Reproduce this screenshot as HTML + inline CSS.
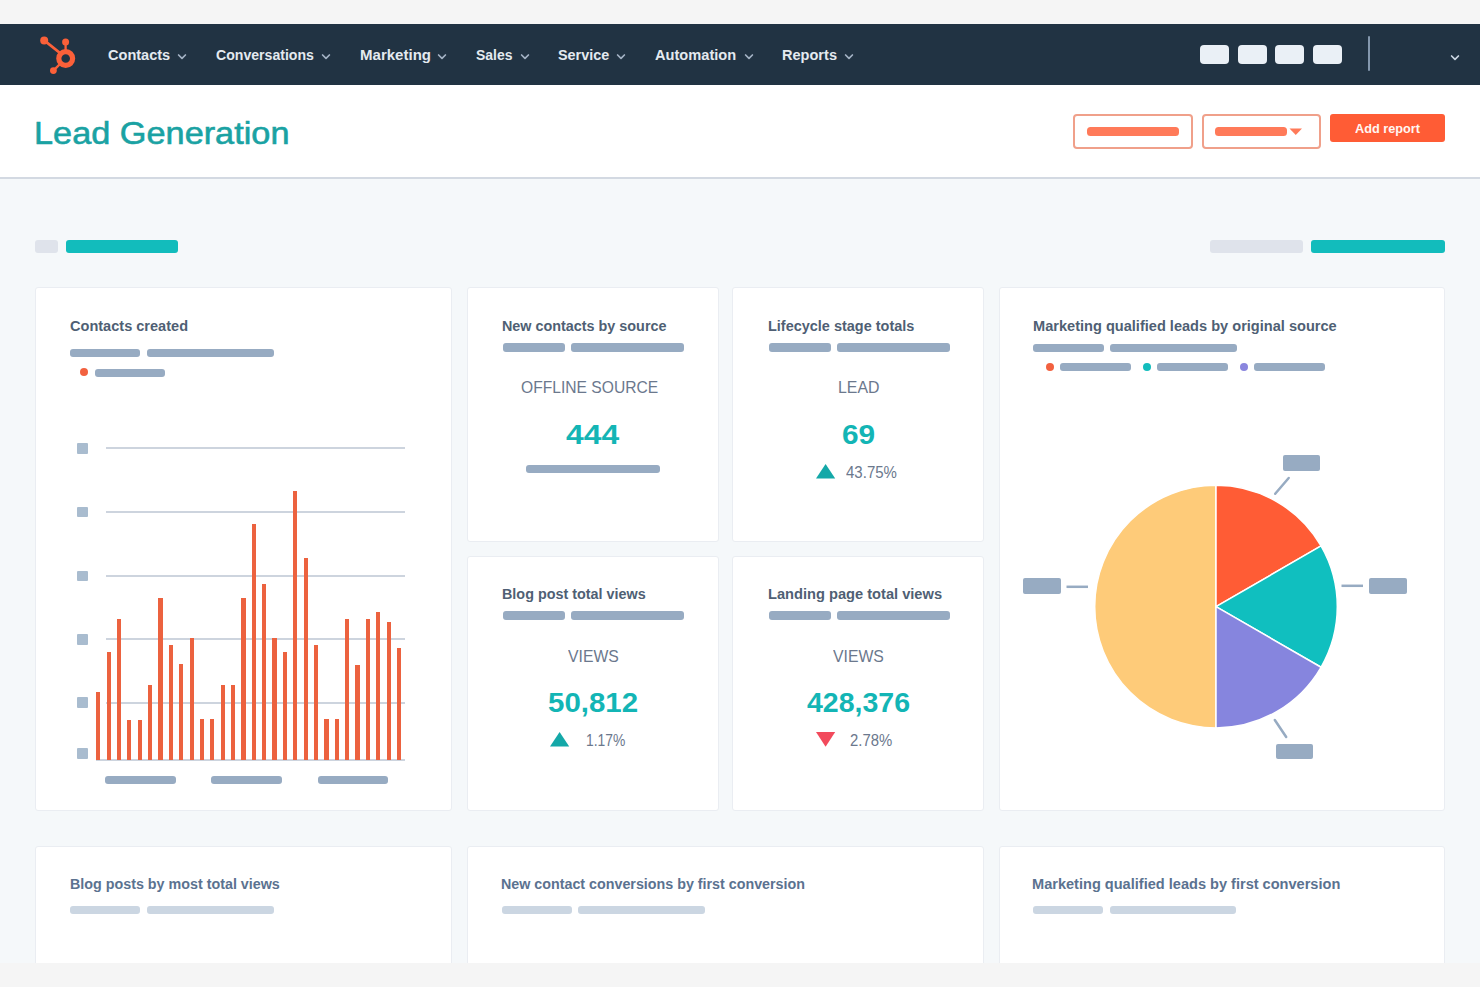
<!DOCTYPE html>
<html><head><meta charset="utf-8"><title>Lead Generation</title>
<style>
html,body{margin:0;padding:0}
body{width:1480px;height:987px;position:relative;overflow:hidden;background:#f5f5f5;font-family:"Liberation Sans",sans-serif}
.t{position:absolute;white-space:nowrap;transform-origin:0 0}
</style></head><body>
<div style="position:absolute;left:0px;top:24px;width:1480px;height:61px;background:#213343;border-radius:0px;"></div>
<div style="position:absolute;left:0px;top:85px;width:1480px;height:92px;background:#ffffff;border-radius:0px;"></div>
<div style="position:absolute;left:0px;top:177px;width:1480px;height:2px;background:#d3d9e2;border-radius:0px;"></div>
<div style="position:absolute;left:0px;top:179px;width:1480px;height:784px;background:#f5f8fa;border-radius:0px;"></div>
<svg style="position:absolute;left:0;top:0" width="120" height="90" viewBox="0 0 120 90">
<g fill="none" stroke="#fb6039" stroke-linecap="round">
<line x1="44.2" y1="40.4" x2="60" y2="53" stroke-width="2.8"/>
<line x1="65.6" y1="42" x2="65.6" y2="50" stroke-width="2.3"/>
<line x1="53.4" y1="70.6" x2="60" y2="64" stroke-width="2.4"/>
<circle cx="65.7" cy="58.5" r="6.9" stroke-width="5.2"/>
</g>
<g fill="#fb6039"><circle cx="44.2" cy="40.4" r="4.0"/><circle cx="65.6" cy="41.9" r="3.5"/><circle cx="53.4" cy="70.6" r="3.4"/></g>
</svg>
<div class="t" style="left:108.42px;top:48.01px;font-size:14.97px;line-height:14.97px;color:#e4eaf0;font-weight:700;transform:scaleX(0.9713)">Contacts</div>
<svg style="position:absolute;left:176.5px;top:52px" width="10" height="8" viewBox="0 0 10 8"><polyline points="1.6,3 5.0,6.4 8.4,3" fill="none" stroke="#a3b2c4" stroke-width="1.7" stroke-linecap="round" stroke-linejoin="round"/></svg>
<div class="t" style="left:215.84px;top:48.01px;font-size:14.97px;line-height:14.97px;color:#e4eaf0;font-weight:700;transform:scaleX(0.9418)">Conversations</div>
<svg style="position:absolute;left:321.0px;top:52px" width="10" height="8" viewBox="0 0 10 8"><polyline points="1.6,3 5.0,6.4 8.4,3" fill="none" stroke="#a3b2c4" stroke-width="1.7" stroke-linecap="round" stroke-linejoin="round"/></svg>
<div class="t" style="left:360.02px;top:48.01px;font-size:14.97px;line-height:14.97px;color:#e4eaf0;font-weight:700;transform:scaleX(1.0041)">Marketing</div>
<svg style="position:absolute;left:436.5px;top:52px" width="10" height="8" viewBox="0 0 10 8"><polyline points="1.6,3 5.0,6.4 8.4,3" fill="none" stroke="#a3b2c4" stroke-width="1.7" stroke-linecap="round" stroke-linejoin="round"/></svg>
<div class="t" style="left:476.08px;top:48.01px;font-size:14.97px;line-height:14.97px;color:#e4eaf0;font-weight:700;transform:scaleX(0.9336)">Sales</div>
<svg style="position:absolute;left:520.0px;top:52px" width="10" height="8" viewBox="0 0 10 8"><polyline points="1.6,3 5.0,6.4 8.4,3" fill="none" stroke="#a3b2c4" stroke-width="1.7" stroke-linecap="round" stroke-linejoin="round"/></svg>
<div class="t" style="left:558.17px;top:48.01px;font-size:14.97px;line-height:14.97px;color:#e4eaf0;font-weight:700;transform:scaleX(0.9618)">Service</div>
<svg style="position:absolute;left:616.0px;top:52px" width="10" height="8" viewBox="0 0 10 8"><polyline points="1.6,3 5.0,6.4 8.4,3" fill="none" stroke="#a3b2c4" stroke-width="1.7" stroke-linecap="round" stroke-linejoin="round"/></svg>
<div class="t" style="left:654.63px;top:48.01px;font-size:14.97px;line-height:14.97px;color:#e4eaf0;font-weight:700;transform:scaleX(0.9769)">Automation</div>
<svg style="position:absolute;left:744.0px;top:52px" width="10" height="8" viewBox="0 0 10 8"><polyline points="1.6,3 5.0,6.4 8.4,3" fill="none" stroke="#a3b2c4" stroke-width="1.7" stroke-linecap="round" stroke-linejoin="round"/></svg>
<div class="t" style="left:782.05px;top:48.01px;font-size:14.97px;line-height:14.97px;color:#e4eaf0;font-weight:700;transform:scaleX(0.9719)">Reports</div>
<svg style="position:absolute;left:843.5px;top:52px" width="10" height="8" viewBox="0 0 10 8"><polyline points="1.6,3 5.0,6.4 8.4,3" fill="none" stroke="#a3b2c4" stroke-width="1.7" stroke-linecap="round" stroke-linejoin="round"/></svg>
<div style="position:absolute;left:1200px;top:45px;width:29px;height:19px;background:#eaf0f6;border-radius:4px;"></div>
<div style="position:absolute;left:1238px;top:45px;width:29px;height:19px;background:#eaf0f6;border-radius:4px;"></div>
<div style="position:absolute;left:1275px;top:45px;width:29px;height:19px;background:#eaf0f6;border-radius:4px;"></div>
<div style="position:absolute;left:1313px;top:45px;width:29px;height:19px;background:#eaf0f6;border-radius:4px;"></div>
<div style="position:absolute;left:1368px;top:36px;width:2px;height:35px;background:#8397ad;border-radius:1px;"></div>
<svg style="position:absolute;left:1449.5px;top:52.5px" width="10" height="8" viewBox="0 0 10 8"><polyline points="1.6,3 5.0,6.4 8.4,3" fill="none" stroke="#cbd6e2" stroke-width="1.7" stroke-linecap="round" stroke-linejoin="round"/></svg>
<div class="t" style="left:34.26px;top:118.00px;font-size:31.83px;line-height:31.83px;color:#1aa2a3;font-weight:400;transform:scaleX(1.0774);-webkit-text-stroke:0.6px #1aa2a3">Lead Generation</div>
<div style="position:absolute;left:1073px;top:114px;width:120px;height:35px;box-sizing:border-box;border:2px solid #f0a08a;border-radius:4px"></div>
<div style="position:absolute;left:1087px;top:127px;width:92px;height:8.5px;background:#ff7a59;border-radius:3.5px;"></div>
<div style="position:absolute;left:1201.5px;top:114px;width:119px;height:35px;box-sizing:border-box;border:2px solid #f0a08a;border-radius:4px"></div>
<div style="position:absolute;left:1215px;top:127px;width:72px;height:8.5px;background:#ff7a59;border-radius:3.5px;"></div>
<svg style="position:absolute;left:1289px;top:128px" width="14" height="8" viewBox="0 0 14 8"><polygon points="0.5,0.5 13,0.5 6.75,7" fill="#ff7a59"/></svg>
<div style="position:absolute;left:1329.5px;top:114px;width:115.5px;height:27.5px;background:#ff5c35;border-radius:3px;"></div>
<div class="t" style="left:1354.68px;top:123.00px;font-size:12.94px;line-height:12.94px;color:#fff6f2;font-weight:700;transform:scaleX(0.9825)">Add report</div>
<div style="position:absolute;left:35px;top:239.5px;width:23px;height:13.0px;background:#dfe3eb;border-radius:3px;"></div>
<div style="position:absolute;left:66px;top:239.5px;width:112px;height:13.0px;background:#12bcbc;border-radius:3px;"></div>
<div style="position:absolute;left:1210px;top:239.5px;width:93px;height:13.0px;background:#dfe3eb;border-radius:3px;"></div>
<div style="position:absolute;left:1311px;top:239.5px;width:134px;height:13.0px;background:#12bcbc;border-radius:3px;"></div>
<div style="position:absolute;left:35px;top:287px;width:417px;height:524px;box-sizing:border-box;background:#fff;border:1px solid #eaedf2;border-radius:3px"></div>
<div style="position:absolute;left:467px;top:287px;width:252px;height:255px;box-sizing:border-box;background:#fff;border:1px solid #eaedf2;border-radius:3px"></div>
<div style="position:absolute;left:732px;top:287px;width:252px;height:255px;box-sizing:border-box;background:#fff;border:1px solid #eaedf2;border-radius:3px"></div>
<div style="position:absolute;left:999px;top:287px;width:446px;height:524px;box-sizing:border-box;background:#fff;border:1px solid #eaedf2;border-radius:3px"></div>
<div style="position:absolute;left:467px;top:556px;width:252px;height:255px;box-sizing:border-box;background:#fff;border:1px solid #eaedf2;border-radius:3px"></div>
<div style="position:absolute;left:732px;top:556px;width:252px;height:255px;box-sizing:border-box;background:#fff;border:1px solid #eaedf2;border-radius:3px"></div>
<div style="position:absolute;left:35px;top:846px;width:417px;height:134px;box-sizing:border-box;background:#fff;border:1px solid #eaedf2;border-radius:3px"></div>
<div style="position:absolute;left:467px;top:846px;width:517px;height:134px;box-sizing:border-box;background:#fff;border:1px solid #eaedf2;border-radius:3px"></div>
<div style="position:absolute;left:999px;top:846px;width:446px;height:134px;box-sizing:border-box;background:#fff;border:1px solid #eaedf2;border-radius:3px"></div>
<div class="t" style="left:69.52px;top:319.00px;font-size:14.24px;line-height:14.24px;color:#4f5f74;font-weight:700;transform:scaleX(1.0219)">Contacts created</div>
<div style="position:absolute;left:69.6px;top:348.5px;width:70.9px;height:8.100000000000023px;background:#97abc2;border-radius:3px;"></div>
<div style="position:absolute;left:146.6px;top:348.5px;width:127.1px;height:8.100000000000023px;background:#97abc2;border-radius:3px;"></div>
<div style="position:absolute;left:80.4px;top:368.2px;width:8px;height:8px;border-radius:50%;background:#f2613f"></div>
<div style="position:absolute;left:95px;top:368.7px;width:70.4px;height:8.100000000000023px;background:#97abc2;border-radius:3px;"></div>
<div style="position:absolute;left:106px;top:447px;width:299px;height:2px;background:#cdd4de;border-radius:0px;"></div>
<div style="position:absolute;left:106px;top:511px;width:299px;height:2px;background:#cdd4de;border-radius:0px;"></div>
<div style="position:absolute;left:106px;top:575px;width:299px;height:2px;background:#cdd4de;border-radius:0px;"></div>
<div style="position:absolute;left:106px;top:638px;width:299px;height:2px;background:#cdd4de;border-radius:0px;"></div>
<div style="position:absolute;left:106px;top:702px;width:299px;height:2px;background:#cdd4de;border-radius:0px;"></div>
<div style="position:absolute;left:96px;top:759px;width:309px;height:2px;background:#cdd4de;border-radius:0px;"></div>
<div style="position:absolute;left:77px;top:443.2px;width:10.700000000000003px;height:10.600000000000023px;background:#a9bccf;border-radius:1px;"></div>
<div style="position:absolute;left:77px;top:506.90000000000003px;width:10.700000000000003px;height:10.599999999999966px;background:#a9bccf;border-radius:1px;"></div>
<div style="position:absolute;left:77px;top:570.5px;width:10.700000000000003px;height:10.599999999999909px;background:#a9bccf;border-radius:1px;"></div>
<div style="position:absolute;left:77px;top:634.0px;width:10.700000000000003px;height:10.599999999999909px;background:#a9bccf;border-radius:1px;"></div>
<div style="position:absolute;left:77px;top:697.0px;width:10.700000000000003px;height:10.599999999999909px;background:#a9bccf;border-radius:1px;"></div>
<div style="position:absolute;left:77px;top:748.0px;width:10.700000000000003px;height:10.599999999999909px;background:#a9bccf;border-radius:1px;"></div>
<div style="position:absolute;left:96.2px;top:692.3px;width:4.200000000000003px;height:67.70000000000005px;background:#ec623f;border-radius:0px;"></div>
<div style="position:absolute;left:106.57px;top:651.8px;width:4.200000000000003px;height:108.20000000000005px;background:#ec623f;border-radius:0px;"></div>
<div style="position:absolute;left:116.94px;top:618.6px;width:4.200000000000003px;height:141.39999999999998px;background:#ec623f;border-radius:0px;"></div>
<div style="position:absolute;left:127.31px;top:719.9px;width:4.199999999999989px;height:40.10000000000002px;background:#ec623f;border-radius:0px;"></div>
<div style="position:absolute;left:137.68px;top:719.9px;width:4.199999999999989px;height:40.10000000000002px;background:#ec623f;border-radius:0px;"></div>
<div style="position:absolute;left:148.05px;top:685.4px;width:4.199999999999989px;height:74.60000000000002px;background:#ec623f;border-radius:0px;"></div>
<div style="position:absolute;left:158.42px;top:598.3px;width:4.200000000000017px;height:161.70000000000005px;background:#ec623f;border-radius:0px;"></div>
<div style="position:absolute;left:168.79px;top:644.9px;width:4.200000000000017px;height:115.10000000000002px;background:#ec623f;border-radius:0px;"></div>
<div style="position:absolute;left:179.16px;top:664.4px;width:4.200000000000017px;height:95.60000000000002px;background:#ec623f;border-radius:0px;"></div>
<div style="position:absolute;left:189.53px;top:638px;width:4.199999999999989px;height:122px;background:#ec623f;border-radius:0px;"></div>
<div style="position:absolute;left:199.9px;top:718.7px;width:4.199999999999989px;height:41.299999999999955px;background:#ec623f;border-radius:0px;"></div>
<div style="position:absolute;left:210.27px;top:718.7px;width:4.199999999999989px;height:41.299999999999955px;background:#ec623f;border-radius:0px;"></div>
<div style="position:absolute;left:220.64px;top:685.4px;width:4.200000000000017px;height:74.60000000000002px;background:#ec623f;border-radius:0px;"></div>
<div style="position:absolute;left:231.01px;top:685.4px;width:4.200000000000017px;height:74.60000000000002px;background:#ec623f;border-radius:0px;"></div>
<div style="position:absolute;left:241.38px;top:598.3px;width:4.200000000000017px;height:161.70000000000005px;background:#ec623f;border-radius:0px;"></div>
<div style="position:absolute;left:251.75px;top:524.3px;width:4.199999999999989px;height:235.70000000000005px;background:#ec623f;border-radius:0px;"></div>
<div style="position:absolute;left:262.12px;top:584.2px;width:4.199999999999989px;height:175.79999999999995px;background:#ec623f;border-radius:0px;"></div>
<div style="position:absolute;left:272.49px;top:638.1px;width:4.199999999999989px;height:121.89999999999998px;background:#ec623f;border-radius:0px;"></div>
<div style="position:absolute;left:282.86px;top:651.8px;width:4.199999999999989px;height:108.20000000000005px;background:#ec623f;border-radius:0px;"></div>
<div style="position:absolute;left:293.23px;top:490.8px;width:4.199999999999989px;height:269.2px;background:#ec623f;border-radius:0px;"></div>
<div style="position:absolute;left:303.6px;top:557.8px;width:4.199999999999989px;height:202.20000000000005px;background:#ec623f;border-radius:0px;"></div>
<div style="position:absolute;left:313.97px;top:645.1px;width:4.199999999999989px;height:114.89999999999998px;background:#ec623f;border-radius:0px;"></div>
<div style="position:absolute;left:324.34px;top:718.8px;width:4.2000000000000455px;height:41.200000000000045px;background:#ec623f;border-radius:0px;"></div>
<div style="position:absolute;left:334.71px;top:718.8px;width:4.2000000000000455px;height:41.200000000000045px;background:#ec623f;border-radius:0px;"></div>
<div style="position:absolute;left:345.08px;top:618.6px;width:4.199999999999989px;height:141.39999999999998px;background:#ec623f;border-radius:0px;"></div>
<div style="position:absolute;left:355.45px;top:664.6px;width:4.199999999999989px;height:95.39999999999998px;background:#ec623f;border-radius:0px;"></div>
<div style="position:absolute;left:365.82px;top:618.6px;width:4.199999999999989px;height:141.39999999999998px;background:#ec623f;border-radius:0px;"></div>
<div style="position:absolute;left:376.19px;top:611.8px;width:4.199999999999989px;height:148.20000000000005px;background:#ec623f;border-radius:0px;"></div>
<div style="position:absolute;left:386.56px;top:621.9px;width:4.199999999999989px;height:138.10000000000002px;background:#ec623f;border-radius:0px;"></div>
<div style="position:absolute;left:396.93px;top:647.7px;width:4.199999999999989px;height:112.29999999999995px;background:#ec623f;border-radius:0px;"></div>
<div style="position:absolute;left:104.8px;top:775.5px;width:71.00000000000001px;height:8.5px;background:#97abc2;border-radius:3px;"></div>
<div style="position:absolute;left:211.4px;top:775.5px;width:70.6px;height:8.5px;background:#97abc2;border-radius:3px;"></div>
<div style="position:absolute;left:317.5px;top:775.5px;width:70.80000000000001px;height:8.5px;background:#97abc2;border-radius:3px;"></div>
<div class="t" style="left:501.87px;top:319.02px;font-size:14.10px;line-height:14.10px;color:#4f5f74;font-weight:700;transform:scaleX(1.0192)">New contacts by source</div>
<div style="position:absolute;left:503.1px;top:343.2px;width:62.0px;height:8.400000000000034px;background:#97abc2;border-radius:3px;"></div>
<div style="position:absolute;left:571.1px;top:343.2px;width:113.0px;height:8.400000000000034px;background:#97abc2;border-radius:3px;"></div>
<div class="t" style="left:520.70px;top:380.01px;font-size:16.57px;line-height:16.57px;color:#6b788d;font-weight:400;transform:scaleX(0.9438)">OFFLINE SOURCE</div>
<div class="t" style="left:566.12px;top:421.01px;font-size:27.91px;line-height:27.91px;color:#13b5b5;font-weight:700;transform:scaleX(1.1414)">444</div>
<div style="position:absolute;left:525.9px;top:464.9px;width:134.0px;height:8.200000000000045px;background:#97abc2;border-radius:3px;"></div>
<div class="t" style="left:767.76px;top:319.01px;font-size:14.68px;line-height:14.68px;color:#4f5f74;font-weight:700;transform:scaleX(0.9860)">Lifecycle stage totals</div>
<div style="position:absolute;left:768.7px;top:343.2px;width:61.89999999999998px;height:8.400000000000034px;background:#97abc2;border-radius:3px;"></div>
<div style="position:absolute;left:836.5px;top:343.2px;width:113.20000000000005px;height:8.400000000000034px;background:#97abc2;border-radius:3px;"></div>
<div class="t" style="left:837.63px;top:380.01px;font-size:15.99px;line-height:15.99px;color:#6b788d;font-weight:400;transform:scaleX(0.9942)">LEAD</div>
<div class="t" style="left:842.36px;top:420.00px;font-size:28.34px;line-height:28.34px;color:#13b5b5;font-weight:700;transform:scaleX(1.0517)">69</div>
<svg style="position:absolute;left:815.8px;top:464.1px" width="20" height="15" viewBox="0 0 20 15"><polygon points="9.6,0 19.2,14.6 0,14.6" fill="#14a8a8"/></svg>
<div class="t" style="left:845.80px;top:464.00px;font-size:16.28px;line-height:16.28px;color:#6b788d;font-weight:400;transform:scaleX(0.9233)">43.75%</div>
<div class="t" style="left:502.17px;top:587.01px;font-size:14.68px;line-height:14.68px;color:#4f5f74;font-weight:700;transform:scaleX(0.9789)">Blog post total views</div>
<div style="position:absolute;left:503.1px;top:611.2px;width:62.0px;height:8.399999999999977px;background:#97abc2;border-radius:3px;"></div>
<div style="position:absolute;left:571.1px;top:611.2px;width:113.0px;height:8.399999999999977px;background:#97abc2;border-radius:3px;"></div>
<div class="t" style="left:567.92px;top:649.00px;font-size:15.84px;line-height:15.84px;color:#6b788d;font-weight:400;transform:scaleX(0.9956)">VIEWS</div>
<div class="t" style="left:548.32px;top:688.00px;font-size:28.34px;line-height:28.34px;color:#13b5b5;font-weight:700;transform:scaleX(1.0396)">50,812</div>
<svg style="position:absolute;left:550.3px;top:732.1px" width="20" height="15" viewBox="0 0 20 15"><polygon points="9.6,0 19.2,14.6 0,14.6" fill="#14a8a8"/></svg>
<div class="t" style="left:586.16px;top:733.01px;font-size:16.57px;line-height:16.57px;color:#6b788d;font-weight:400;transform:scaleX(0.8371)">1.17%</div>
<div class="t" style="left:767.75px;top:587.01px;font-size:14.68px;line-height:14.68px;color:#4f5f74;font-weight:700;transform:scaleX(0.9976)">Landing page total views</div>
<div style="position:absolute;left:768.7px;top:611.2px;width:61.89999999999998px;height:8.399999999999977px;background:#97abc2;border-radius:3px;"></div>
<div style="position:absolute;left:836.5px;top:611.2px;width:113.20000000000005px;height:8.399999999999977px;background:#97abc2;border-radius:3px;"></div>
<div class="t" style="left:833.32px;top:649.00px;font-size:15.84px;line-height:15.84px;color:#6b788d;font-weight:400;transform:scaleX(0.9975)">VIEWS</div>
<div class="t" style="left:807.47px;top:688.00px;font-size:28.34px;line-height:28.34px;color:#13b5b5;font-weight:700;transform:scaleX(1.0065)">428,376</div>
<svg style="position:absolute;left:815.8px;top:731.9px" width="20" height="16" viewBox="0 0 20 16"><polygon points="0,0 19.2,0 9.6,14.8" fill="#f24a5c"/></svg>
<div class="t" style="left:849.95px;top:733.01px;font-size:16.57px;line-height:16.57px;color:#6b788d;font-weight:400;transform:scaleX(0.8998)">2.78%</div>
<div class="t" style="left:1032.85px;top:319.01px;font-size:14.97px;line-height:14.97px;color:#4f5f74;font-weight:700;transform:scaleX(0.9737)">Marketing qualified leads by original source</div>
<div style="position:absolute;left:1032.9px;top:344.2px;width:70.69999999999982px;height:8.100000000000023px;background:#97abc2;border-radius:3px;"></div>
<div style="position:absolute;left:1109.9px;top:344.2px;width:127.5px;height:8.100000000000023px;background:#97abc2;border-radius:3px;"></div>
<div style="position:absolute;left:1046.1px;top:363.4px;width:8px;height:8px;border-radius:50%;background:#f2613f"></div>
<div style="position:absolute;left:1060.1px;top:363.4px;width:70.70000000000005px;height:8.0px;background:#97abc2;border-radius:3px;"></div>
<div style="position:absolute;left:1143.1px;top:363.4px;width:8px;height:8px;border-radius:50%;background:#13bdbd"></div>
<div style="position:absolute;left:1157.1px;top:363.4px;width:70.70000000000005px;height:8.0px;background:#97abc2;border-radius:3px;"></div>
<div style="position:absolute;left:1240.1px;top:363.4px;width:8px;height:8px;border-radius:50%;background:#8a86de"></div>
<div style="position:absolute;left:1254.1px;top:363.4px;width:70.90000000000009px;height:8.0px;background:#97abc2;border-radius:3px;"></div>
<svg style="position:absolute;left:0;top:0" width="1480" height="987"><path d="M1216,606.6 L1216.00,727.90 A121.3,121.3 0 0 1 1216.00,485.30 Z" fill="#fecb79" stroke="#fff" stroke-width="1.5" stroke-linejoin="round"/><path d="M1216,606.6 L1216.00,485.30 A121.3,121.3 0 0 1 1321.05,545.95 Z" fill="#ff5c35" stroke="#fff" stroke-width="1.5" stroke-linejoin="round"/><path d="M1216,606.6 L1321.05,545.95 A121.3,121.3 0 0 1 1321.05,667.25 Z" fill="#10bfbf" stroke="#fff" stroke-width="1.5" stroke-linejoin="round"/><path d="M1216,606.6 L1321.05,667.25 A121.3,121.3 0 0 1 1216.00,727.90 Z" fill="#8685de" stroke="#fff" stroke-width="1.5" stroke-linejoin="round"/><line x1="1066.5" y1="586.8" x2="1088" y2="586.8" stroke="#97abc2" stroke-width="2.5"/><line x1="1341.5" y1="585.8" x2="1363" y2="585.8" stroke="#97abc2" stroke-width="2.5"/><line x1="1288.7" y1="478" x2="1275.2" y2="493.8" stroke="#97abc2" stroke-width="2.5" stroke-linecap="round"/><line x1="1274.8" y1="720" x2="1286.2" y2="737" stroke="#97abc2" stroke-width="2.5" stroke-linecap="round"/></svg>
<div style="position:absolute;left:1023.2px;top:578px;width:37.5px;height:15.799999999999955px;background:#97abc2;border-radius:2px;"></div>
<div style="position:absolute;left:1368.9px;top:577.7px;width:37.799999999999955px;height:16.09999999999991px;background:#97abc2;border-radius:2px;"></div>
<div style="position:absolute;left:1282.6px;top:455px;width:37.600000000000136px;height:15.5px;background:#97abc2;border-radius:2px;"></div>
<div style="position:absolute;left:1276.2px;top:743.6px;width:37.299999999999955px;height:15.600000000000023px;background:#97abc2;border-radius:2px;"></div>
<div class="t" style="left:69.57px;top:877.02px;font-size:14.10px;line-height:14.10px;color:#5b7290;font-weight:700;transform:scaleX(1.0148)">Blog posts by most total views</div>
<div style="position:absolute;left:69.7px;top:906.3px;width:70.10000000000001px;height:8.200000000000045px;background:#cbd6e2;border-radius:3px;"></div>
<div style="position:absolute;left:146.8px;top:906.3px;width:126.89999999999998px;height:8.200000000000045px;background:#cbd6e2;border-radius:3px;"></div>
<div class="t" style="left:500.97px;top:876.01px;font-size:15.26px;line-height:15.26px;color:#5b7290;font-weight:700;transform:scaleX(0.9364)">New contact conversions by first conversion</div>
<div style="position:absolute;left:501.5px;top:906.4px;width:70.5px;height:8.0px;background:#cbd6e2;border-radius:3px;"></div>
<div style="position:absolute;left:578.4px;top:906.4px;width:127.10000000000002px;height:8.0px;background:#cbd6e2;border-radius:3px;"></div>
<div class="t" style="left:1031.65px;top:876.01px;font-size:15.26px;line-height:15.26px;color:#5b7290;font-weight:700;transform:scaleX(0.9549)">Marketing qualified leads by first conversion</div>
<div style="position:absolute;left:1032.6px;top:906.4px;width:70.60000000000014px;height:8.0px;background:#cbd6e2;border-radius:3px;"></div>
<div style="position:absolute;left:1109.6px;top:906.4px;width:126.80000000000018px;height:8.0px;background:#cbd6e2;border-radius:3px;"></div>
<div style="position:absolute;left:0px;top:963px;width:1480px;height:24px;background:#f5f5f5;border-radius:0px;"></div>
</body></html>
